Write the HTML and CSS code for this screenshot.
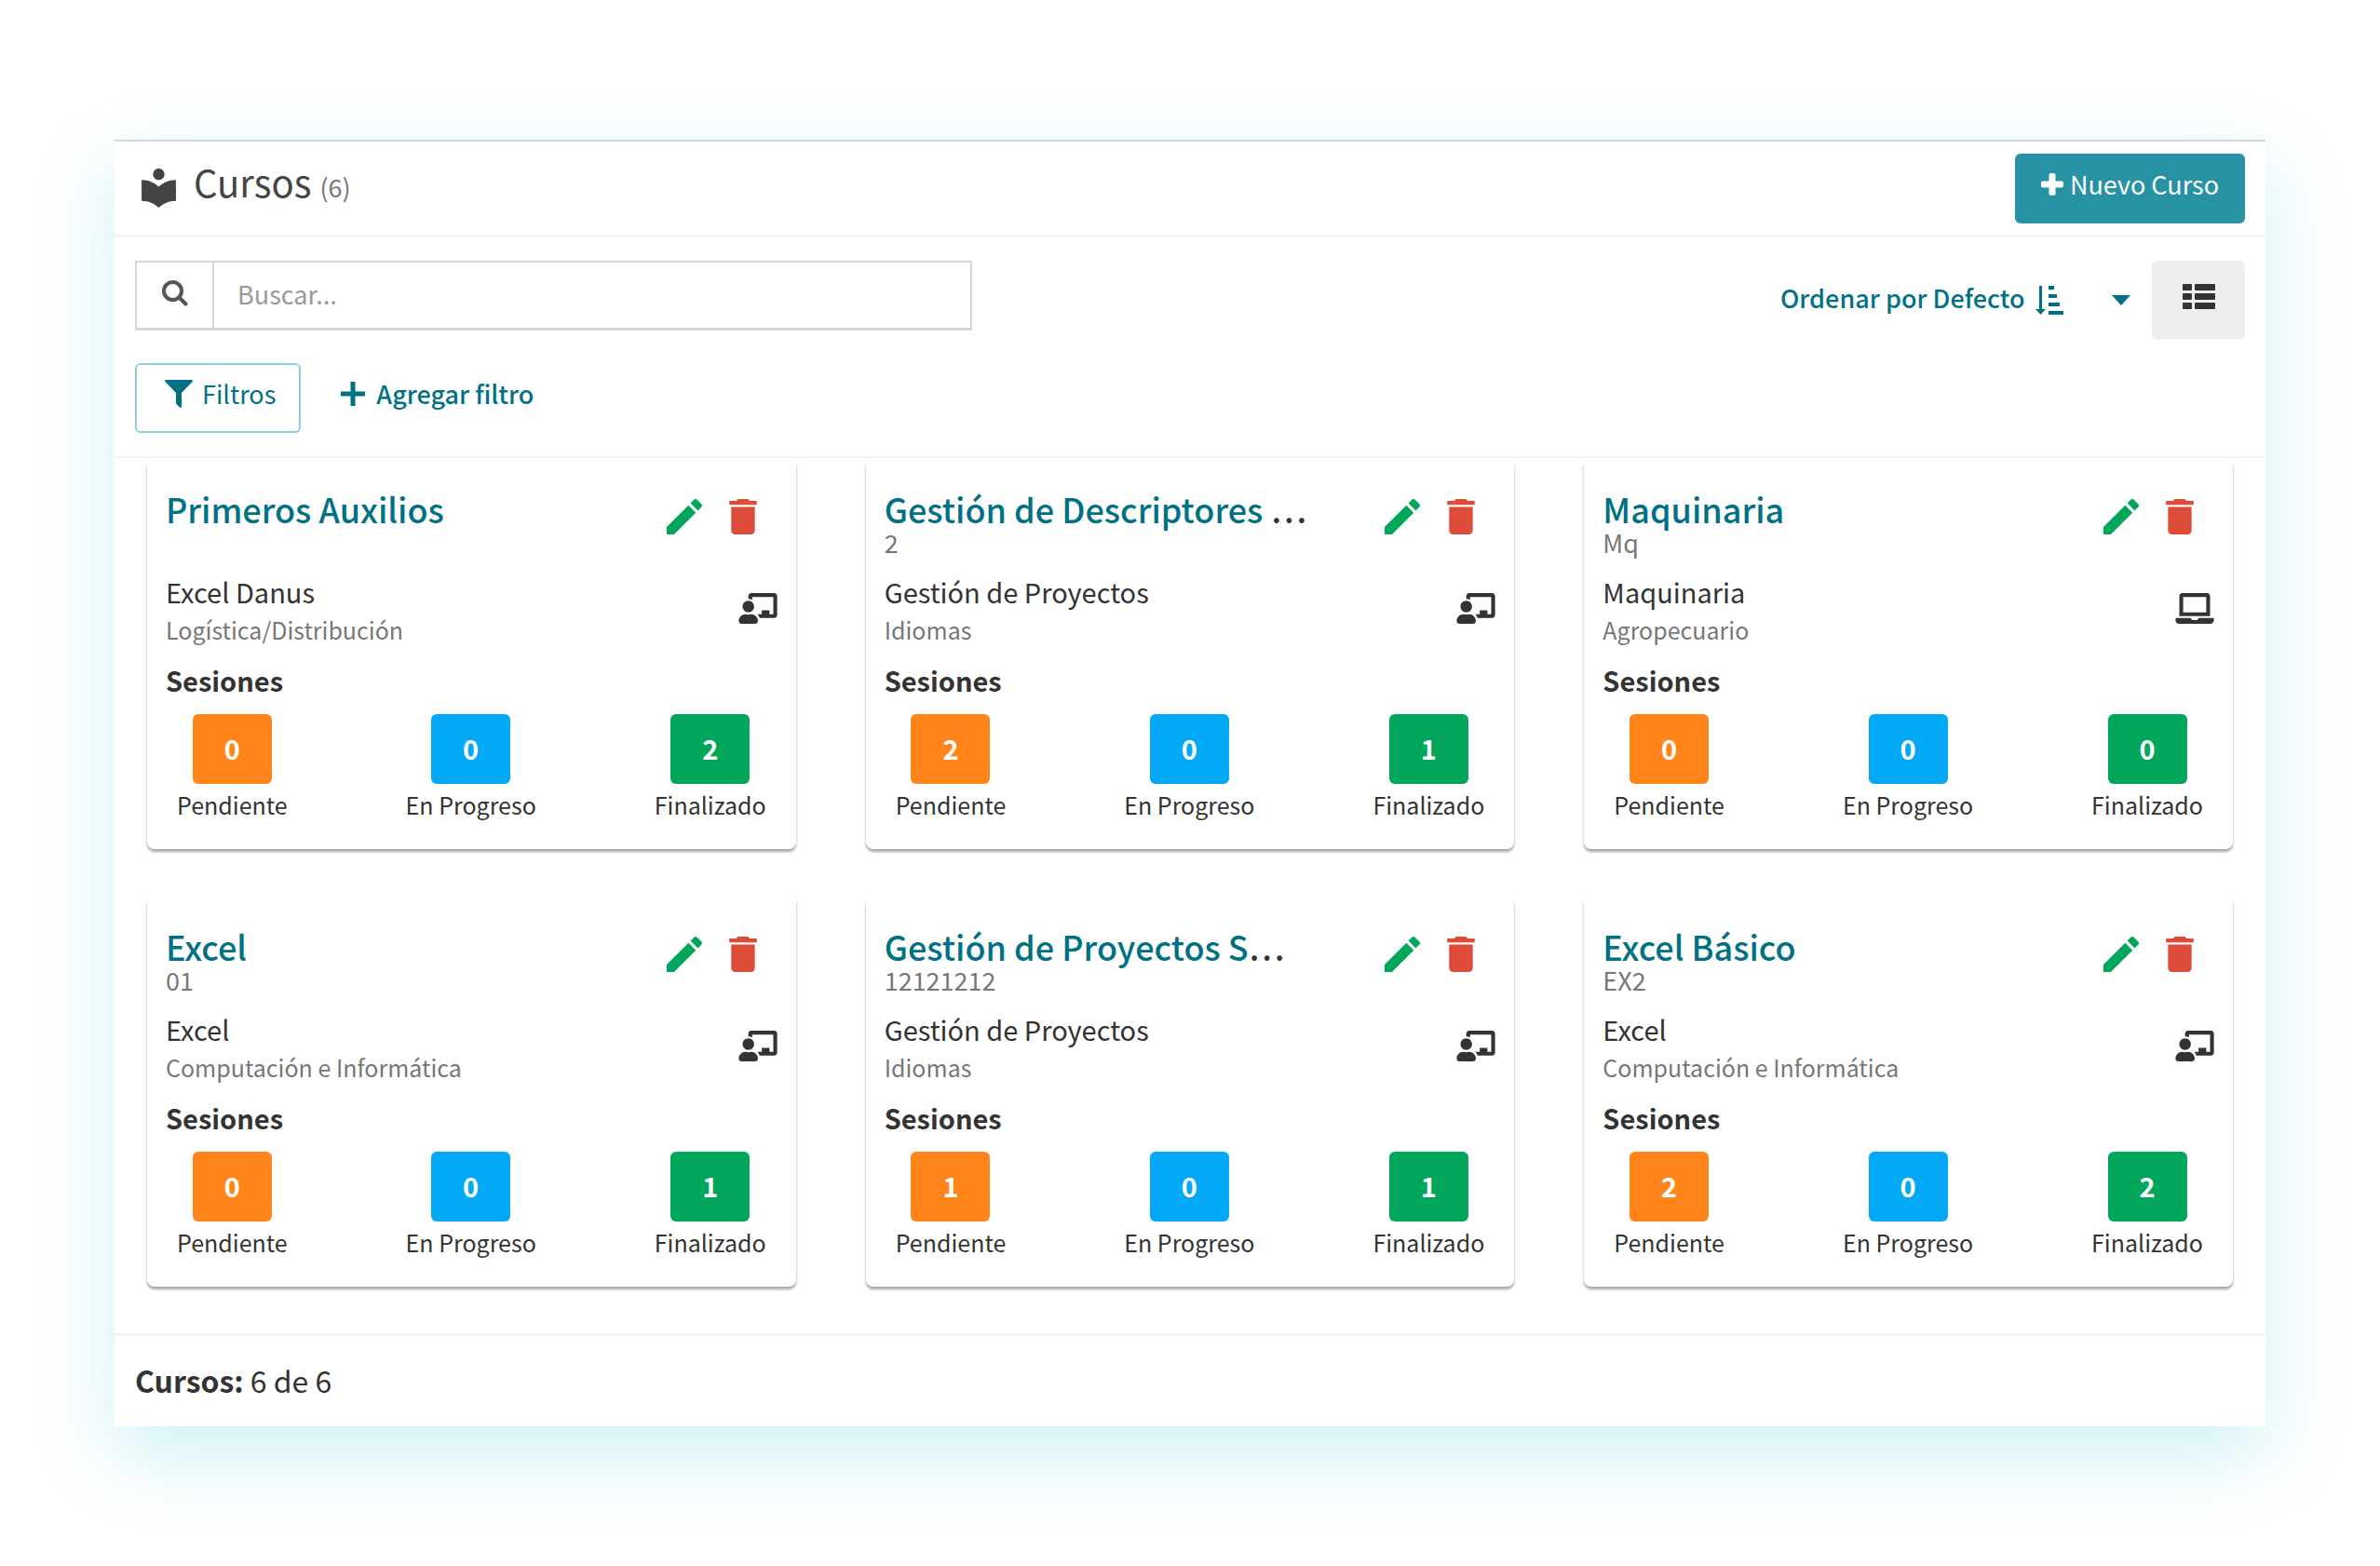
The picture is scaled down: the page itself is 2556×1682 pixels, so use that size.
FILE: index.html
```html
<!DOCTYPE html>
<html lang="es">
<head>
<meta charset="utf-8">
<meta name="viewport" content="width=device-width, initial-scale=1">
<title>Cursos</title>
<link rel="stylesheet" href="styles.css">
</head>
<body>
<svg class="sprite" aria-hidden="true">
  <symbol id="i-edit" viewBox="3 3 18 18"><path d="M3 17.25V21h3.75L17.81 9.94l-3.75-3.75L3 17.25zM20.71 7.04c.39-.39.39-1.02 0-1.41l-2.34-2.34c-.39-.39-1.02-.39-1.41 0l-1.83 1.83 3.75 3.75 1.83-1.83z"/></symbol>
  <symbol id="i-trash" viewBox="5 3 14 18"><path d="M6 19c0 1.1.9 2 2 2h8c1.1 0 2-.9 2-2V7H6v12zM19 4h-3.5l-1-1h-5l-1 1H5v2h14V4z"/></symbol>
  <symbol id="i-class" viewBox="0 0 640 512"><path d="M208 352c-2.39 0-4.78.35-7.06 1.09C187.98 357.3 174.35 360 160 360c-14.35 0-27.98-2.7-40.95-6.91-2.28-.74-4.66-1.09-7.05-1.09C49.94 352-.33 402.48 0 464.62.14 490.88 21.73 512 48 512h224c26.27 0 47.86-21.12 48-47.38.33-62.14-49.94-112.62-112-112.62zm-48-32c53.02 0 96-42.98 96-96s-42.98-96-96-96-96 42.98-96 96 42.98 96 96 96zM592 0H208c-26.47 0-48 22.25-48 49.59V96c23.42 0 45.1 6.78 64 17.8V64h352v288h-64v-64H384v64h-76.24c19.1 16.69 33.12 38.73 39.69 64H592c26.47 0 48-22.25 48-49.59V49.59C640 22.25 618.47 0 592 0z"/></symbol>
  <symbol id="i-laptop" viewBox="0 0 640 512"><path d="M624 416H381.54c-.74 19.81-14.71 32-32.74 32H288c-18.69 0-33.02-17.47-32.77-32H16c-8.8 0-16 7.2-16 16v16c0 35.2 28.8 64 64 64h512c35.2 0 64-28.8 64-64v-16c0-8.8-7.2-16-16-16zM576 48c0-26.4-21.6-48-48-48H112C85.6 0 64 21.6 64 48v336h512V48zm-64 272H128V64h384v256z"/></symbol>
</svg>
<main class="panel">
  <header class="panel-header">
    <svg class="icon-book" viewBox="3 2 18 21" aria-hidden="true"><path d="M12 11.55C9.64 9.35 6.48 8 3 8v11c3.48 0 6.64 1.35 9 3.55 2.36-2.19 5.52-3.55 9-3.55V8c-3.48 0-6.64 1.35-9 3.55zM12 8c1.66 0 3-1.34 3-3s-1.34-3-3-3-3 1.34-3 3 1.34 3 3 3z"/></svg>
    <h1 class="panel-title">Cursos <small class="panel-count">(6)</small></h1>
    <button class="btn btn-primary" type="button"><svg class="icon-plus" viewBox="0 0 24 24" aria-hidden="true"><path d="M10.500 0h3q2 0 2 2v6.500h6.500q2 0 2 2v3q0 2-2 2h-6.500v6.500q0 2-2 2h-3q-2 0-2-2v-6.500H2q-2 0-2-2v-3q0-2 2-2h6.500V2q0-2 2-2z"/></svg>Nuevo Curso</button>
  </header>

  <section class="toolbar">
    <div class="toolbar-row">
      <form class="search">
        <button class="search-btn" type="button" aria-label="Buscar"><svg class="icon-search" viewBox="0 0 28 28" aria-hidden="true"><circle cx="11.500" cy="11.500" r="9.500"/><path d="M18.500 18.500l7 7"/></svg></button>
        <input class="search-input" type="text" placeholder="Buscar..." aria-label="Buscar cursos">
      </form>
      <div class="toolbar-right">
        <label class="sort">
          <select class="sort-select" aria-label="Ordenar"><option>Ordenar por Defecto</option></select>
          <svg class="icon-sort" viewBox="0 0 30 32" aria-hidden="true"><path d="M4 0h3v25h4l-5.500 6L0 25h4zM14 0h6v4h-6zM14 9h9v4h-9zM14 18h12v4H14zM14 27h16v4H14z"/></svg>
          <svg class="icon-caret" viewBox="0 0 20 11" aria-hidden="true"><path d="M0 0h20L10 11z"/></svg>
        </label>
        <button class="view-btn" type="button" aria-label="Vista de lista"><svg class="icon-list" viewBox="0 0 35 27" aria-hidden="true"><rect width="10" height="7" rx="1"/><rect x="13" width="22" height="7" rx="1"/><rect y="10" width="10" height="7" rx="1"/><rect x="13" y="10" width="22" height="7" rx="1"/><rect y="20" width="10" height="7" rx="1"/><rect x="13" y="20" width="22" height="7" rx="1"/></svg></button>
      </div>
    </div>
    <div class="filters">
      <button class="btn btn-outline" type="button"><svg class="icon-filter" viewBox="0 0 30 30" aria-hidden="true"><path d="M1 0h28q1.500 1 .5 2L18 14v15q-.5 1.500-2 .5l-3.500-3.500q-.5-.5-.5-1.500V14L.5 2Q-.5 1 1 0z"/></svg>Filtros</button>
      <button class="btn-link" type="button"><svg class="icon-add" viewBox="0 0 28 28" aria-hidden="true"><path d="M14 1v26M1 14h26"/></svg>Agregar filtro</button>
    </div>
  </section>

  <section class="courses">
    <article class="card">
      <div class="card-head">
        <h2 class="card-title"><a href="#">Primeros Auxilios</a></h2>
        <div class="card-actions">
          <button class="icon-btn edit" type="button" aria-label="Editar"><svg class="icon-edit"><use href="#i-edit"/></svg></button>
          <button class="icon-btn delete" type="button" aria-label="Eliminar"><svg class="icon-trash"><use href="#i-trash"/></svg></button>
        </div>
      </div>
      <p class="card-code"></p>
      <div class="card-info">
        <div><p class="card-name">Excel Danus</p><p class="card-area">Logística/Distribución</p></div>
        <svg class="icon-mode" aria-hidden="true"><use href="#i-class"/></svg>
      </div>
      <h3 class="card-sub">Sesiones</h3>
      <ul class="stats">
        <li><b class="badge pending">0</b>Pendiente</li>
        <li><b class="badge progress">0</b>En Progreso</li>
        <li><b class="badge done">2</b>Finalizado</li>
      </ul>
    </article>

    <article class="card">
      <div class="card-head">
        <h2 class="card-title"><a href="#">Gestión de Descriptores </a>…</h2>
        <div class="card-actions">
          <button class="icon-btn edit" type="button" aria-label="Editar"><svg class="icon-edit"><use href="#i-edit"/></svg></button>
          <button class="icon-btn delete" type="button" aria-label="Eliminar"><svg class="icon-trash"><use href="#i-trash"/></svg></button>
        </div>
      </div>
      <p class="card-code">2</p>
      <div class="card-info">
        <div><p class="card-name">Gestión de Proyectos</p><p class="card-area">Idiomas</p></div>
        <svg class="icon-mode" aria-hidden="true"><use href="#i-class"/></svg>
      </div>
      <h3 class="card-sub">Sesiones</h3>
      <ul class="stats">
        <li><b class="badge pending">2</b>Pendiente</li>
        <li><b class="badge progress">0</b>En Progreso</li>
        <li><b class="badge done">1</b>Finalizado</li>
      </ul>
    </article>

    <article class="card">
      <div class="card-head">
        <h2 class="card-title"><a href="#">Maquinaria</a></h2>
        <div class="card-actions">
          <button class="icon-btn edit" type="button" aria-label="Editar"><svg class="icon-edit"><use href="#i-edit"/></svg></button>
          <button class="icon-btn delete" type="button" aria-label="Eliminar"><svg class="icon-trash"><use href="#i-trash"/></svg></button>
        </div>
      </div>
      <p class="card-code">Mq</p>
      <div class="card-info">
        <div><p class="card-name">Maquinaria</p><p class="card-area">Agropecuario</p></div>
        <svg class="icon-mode" aria-hidden="true"><use href="#i-laptop"/></svg>
      </div>
      <h3 class="card-sub">Sesiones</h3>
      <ul class="stats">
        <li><b class="badge pending">0</b>Pendiente</li>
        <li><b class="badge progress">0</b>En Progreso</li>
        <li><b class="badge done">0</b>Finalizado</li>
      </ul>
    </article>

    <article class="card">
      <div class="card-head">
        <h2 class="card-title"><a href="#">Excel</a></h2>
        <div class="card-actions">
          <button class="icon-btn edit" type="button" aria-label="Editar"><svg class="icon-edit"><use href="#i-edit"/></svg></button>
          <button class="icon-btn delete" type="button" aria-label="Eliminar"><svg class="icon-trash"><use href="#i-trash"/></svg></button>
        </div>
      </div>
      <p class="card-code">01</p>
      <div class="card-info">
        <div><p class="card-name">Excel</p><p class="card-area">Computación e Informática</p></div>
        <svg class="icon-mode" aria-hidden="true"><use href="#i-class"/></svg>
      </div>
      <h3 class="card-sub">Sesiones</h3>
      <ul class="stats">
        <li><b class="badge pending">0</b>Pendiente</li>
        <li><b class="badge progress">0</b>En Progreso</li>
        <li><b class="badge done">1</b>Finalizado</li>
      </ul>
    </article>

    <article class="card">
      <div class="card-head">
        <h2 class="card-title"><a href="#">Gestión de Proyectos S</a>…</h2>
        <div class="card-actions">
          <button class="icon-btn edit" type="button" aria-label="Editar"><svg class="icon-edit"><use href="#i-edit"/></svg></button>
          <button class="icon-btn delete" type="button" aria-label="Eliminar"><svg class="icon-trash"><use href="#i-trash"/></svg></button>
        </div>
      </div>
      <p class="card-code">12121212</p>
      <div class="card-info">
        <div><p class="card-name">Gestión de Proyectos</p><p class="card-area">Idiomas</p></div>
        <svg class="icon-mode" aria-hidden="true"><use href="#i-class"/></svg>
      </div>
      <h3 class="card-sub">Sesiones</h3>
      <ul class="stats">
        <li><b class="badge pending">1</b>Pendiente</li>
        <li><b class="badge progress">0</b>En Progreso</li>
        <li><b class="badge done">1</b>Finalizado</li>
      </ul>
    </article>

    <article class="card">
      <div class="card-head">
        <h2 class="card-title"><a href="#">Excel Básico</a></h2>
        <div class="card-actions">
          <button class="icon-btn edit" type="button" aria-label="Editar"><svg class="icon-edit"><use href="#i-edit"/></svg></button>
          <button class="icon-btn delete" type="button" aria-label="Eliminar"><svg class="icon-trash"><use href="#i-trash"/></svg></button>
        </div>
      </div>
      <p class="card-code">EX2</p>
      <div class="card-info">
        <div><p class="card-name">Excel</p><p class="card-area">Computación e Informática</p></div>
        <svg class="icon-mode" aria-hidden="true"><use href="#i-class"/></svg>
      </div>
      <h3 class="card-sub">Sesiones</h3>
      <ul class="stats">
        <li><b class="badge pending">2</b>Pendiente</li>
        <li><b class="badge progress">0</b>En Progreso</li>
        <li><b class="badge done">2</b>Finalizado</li>
      </ul>
    </article>
  </section>

  <footer class="panel-footer"><b>Cursos:</b> 6 de 6</footer>
</main>
</body>
</html>
```
FILE: styles.css
```css
* { box-sizing: border-box; }

body {
  margin: 0;
  padding: 150px 123px;
  background: #fff;
  color: #333;
  font: 27px/40px "Noto Sans CJK KR", "Noto Sans", sans-serif;
}

h1, h2, h3, p, ul { margin: 0; padding: 0; }
ul { list-style: none; }
button, input, select { font: inherit; color: inherit; }
button { border: 0; background: none; padding: 0; cursor: pointer; }
svg { display: block; flex: none; fill: currentColor; }
.sprite { display: none; }

.panel {
  background: #fff;
  border-top: 2px solid #d2d6de;
  box-shadow: 0 30px 80px rgba(0, 183, 209, .2);
}

/* Header */
.panel-header {
  display: flex;
  align-items: flex-start;
  padding: 13px 22px 12px 29px;
  border-bottom: 3px solid #f4f4f4;
}
.icon-book { width: 37px; height: 43px; margin-top: 16px; color: #444; }
.panel-title { flex: 1; margin-left: 19px; font-size: 40px; line-height: 60px; font-weight: 400; color: #444; }
.panel-count { font-size: 27px; color: #777; }

.btn {
  display: flex;
  align-items: center;
  height: 75px;
  padding-bottom: 10px;
  border-radius: 6px;
}
.btn-primary { gap: 7px; padding-left: 28px; padding-right: 28px; background: #2692a4; color: #fff; }
.icon-plus { width: 24px; height: 24px; }

/* Toolbar */
.toolbar { padding: 25px 22px; border-bottom: 2px solid #f4f4f4; }
.toolbar-row { display: flex; justify-content: space-between; align-items: flex-start; }
.search { display: flex; width: calc(40% - 7px); height: 75px; border: 2px solid #d2d6de; border-bottom-width: 3px; }
.search-btn { width: 81px; padding: 0 0 4px 27px; color: #555; }
.icon-search { width: 28px; height: 28px; fill: none; stroke: currentColor; stroke-width: 4; stroke-linecap: round; }
.search-input { flex: 1; min-width: 0; border: 0; border-left: 2px solid #d2d6de; padding: 0 25px 2px; outline: 0; background: none; }
.search-input::placeholder { color: #999; opacity: 1; }
.toolbar-right { display: flex; align-items: center; gap: 23px; }
.sort { display: flex; align-items: center; color: #007184; }
.sort-select { appearance: none; border: 0; padding: 0 0 6px; background: none; font-weight: 500; }
.icon-sort { width: 30px; height: 32px; margin: 0 52px 0 11px; }
.icon-caret { width: 20px; height: 11px; }
.view-btn { display: flex; justify-content: center; width: 100px; height: 85px; padding: 25px 0; border-radius: 6px; background: #eee; color: #333; }
.icon-list { width: 35px; height: 27px; }

.filters { display: flex; gap: 42px; margin-top: 25px; color: #007184; }
.btn-outline { gap: 10px; padding-left: 30px; padding-right: 25px; border: 2px solid #8ecfdb; }
.icon-filter { width: 30px; height: 30px; }
.btn-link { display: flex; align-items: center; gap: 11px; padding-bottom: 10px; font-weight: 500; }
.icon-add { width: 28px; height: 28px; fill: none; stroke: currentColor; stroke-width: 5; }

/* Course cards */
.courses {
  display: grid;
  grid-template-columns: repeat(3, 1fr);
  gap: 50px 75px;
  padding: 0 35px 50px;
}
.card {
  min-width: 0;
  padding: 32px 20px 28px;
  border-radius: 8px;
  box-shadow: 0 3px 3px rgba(0, 0, 0, .35);
}
.card-head { display: flex; justify-content: space-between; }
.card-title { white-space: nowrap; font-size: 36px; line-height: 44px; font-weight: 500; }
.card-title a { color: #007184; text-decoration: none; white-space: pre; }
.card-actions { display: flex; align-items: flex-start; gap: 29px; height: 44px; padding: 12px 22px 0 0; }
.edit { color: #00a65a; }
.delete { color: #dd4b39; }
.icon-edit { width: 38px; height: 38px; }
.icon-trash { width: 30px; height: 38px; }
.card-code { height: 30px; line-height: 30px; color: #777; }
.card-info { display: flex; justify-content: space-between; margin-top: 16px; }
.card-name { font-size: 29px; line-height: 42px; }
.card-area { font-size: 25px; color: #777; }
.icon-mode { width: 42px; height: 33px; margin-top: 23px; }
.card-sub { margin-top: 14px; font-size: 29px; font-weight: 700; }
.stats { display: flex; justify-content: space-between; margin-top: 17px; padding: 0 12px; font-size: 25px; }
.stats li { display: flex; flex-direction: column; align-items: center; gap: 2px; }
.badge { width: 85px; height: 75px; border-radius: 6px; color: #fff; font-size: 29px; line-height: 72px; text-align: center; }
.pending { background: #ff851b; }
.progress { background: #03a9f4; }
.done { background: #00a65a; }

.panel-footer { padding: 27px 22px 30px; border-top: 3px solid #f4f4f4; font-size: 32px; }
```
